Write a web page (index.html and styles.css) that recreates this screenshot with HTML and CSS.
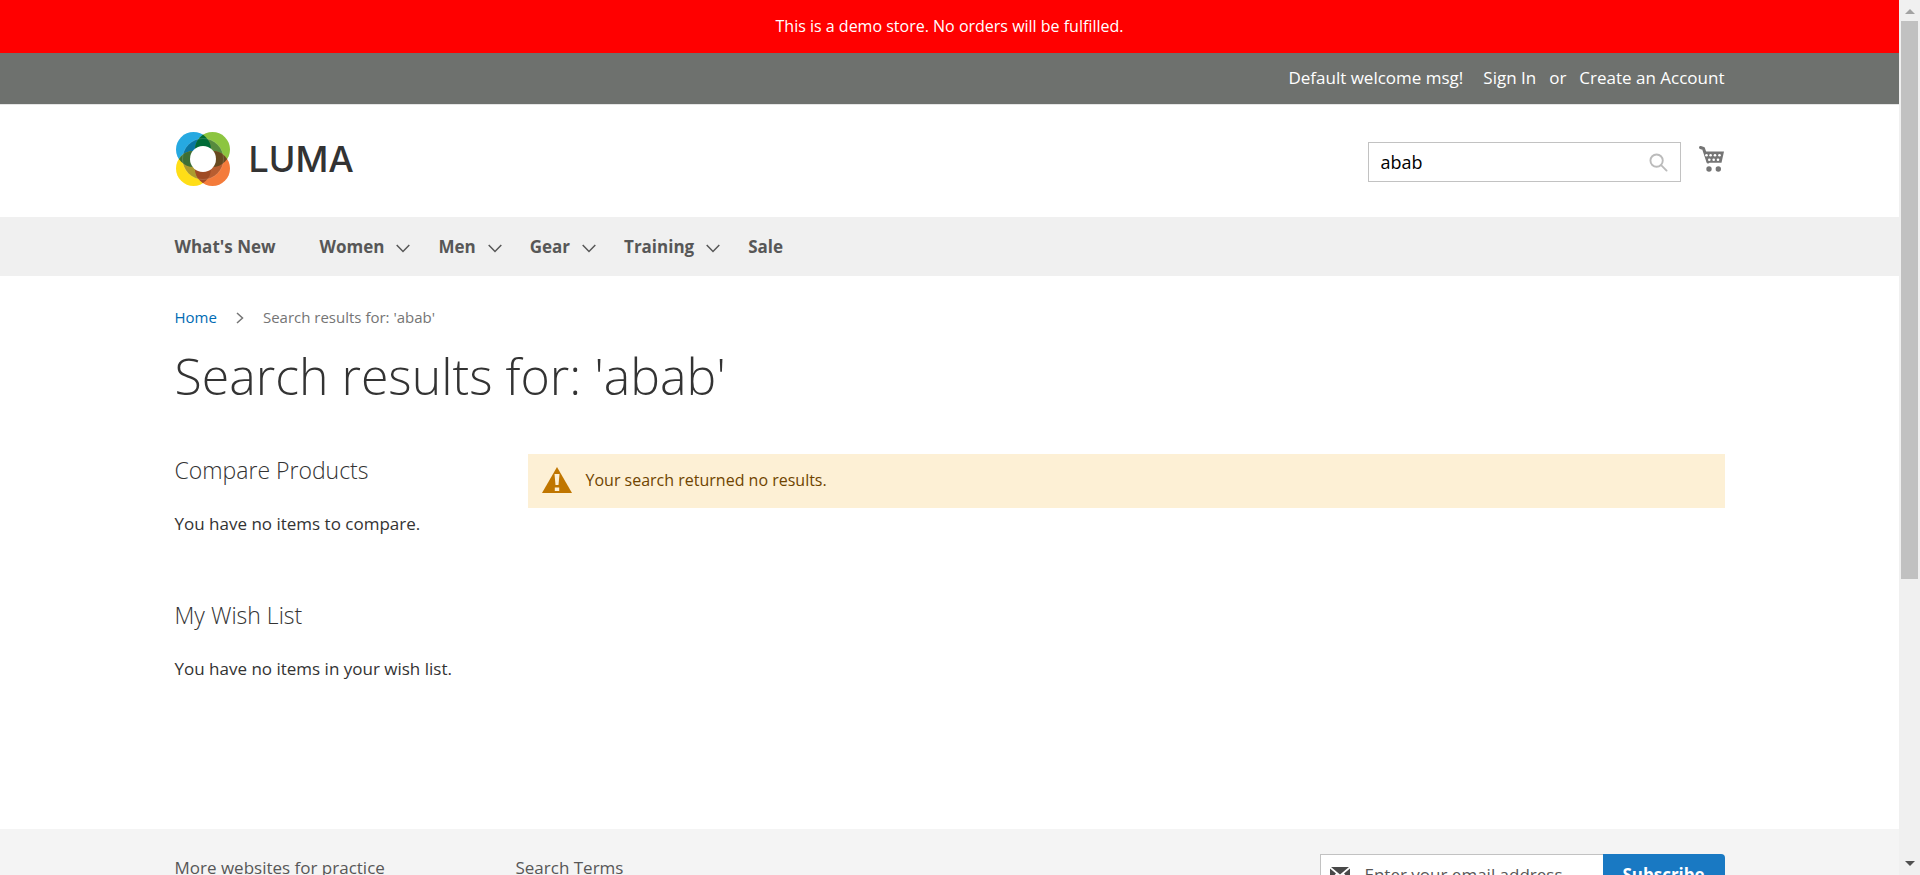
FILE: index.html
```html
<!DOCTYPE html>
<html lang="en">
<head>
<meta charset="utf-8">
<meta name="viewport" content="width=device-width, initial-scale=1">
<title>Search results for: 'abab'</title>
<link rel="stylesheet" href="styles.css">
</head>
<body>
<div class="viewport">
  <div class="page">
    <div class="demo-notice">This is a demo store. No orders will be fulfilled.</div>

    <header>
      <div class="top-bar">
        <div class="container top-links">
          <span class="greeting">Default welcome msg!</span>
          <a href="#signin">Sign In</a>
          <span class="or">or</span>
          <a href="#register">Create an Account</a>
        </div>
      </div>
      <div class="container brand-row">
        <a class="logo" href="#home" aria-label="Luma">
          <svg class="logo-mark" viewBox="0 0 54 54" aria-hidden="true">
            <defs>
              <clipPath id="ring"><circle cx="27" cy="27" r="20.5"/></clipPath>
              <clipPath id="tl"><circle cx="17.5" cy="17.5" r="17.5"/></clipPath>
              <clipPath id="br"><circle cx="36.5" cy="36.5" r="17.5"/></clipPath>
            </defs>
            <circle cx="17.5" cy="17.5" r="17.5" fill="#26a9e1"/>
            <circle cx="36.5" cy="17.5" r="17.5" fill="#8cc540"/>
            <circle cx="17.5" cy="36.5" r="17.5" fill="#ffde17"/>
            <circle cx="36.5" cy="36.5" r="17.5" fill="#f47b3b"/>
            <g clip-path="url(#ring)">
              <circle cx="17.5" cy="17.5" r="17.5" fill="#0a75a0"/>
              <circle cx="36.5" cy="17.5" r="17.5" fill="#578a3e"/>
              <circle cx="17.5" cy="36.5" r="17.5" fill="#ab9a2f"/>
              <circle cx="36.5" cy="36.5" r="17.5" fill="#b85d30"/>
            </g>
            <g clip-path="url(#tl)">
              <circle cx="36.5" cy="17.5" r="17.5" fill="#006b37"/>
              <circle cx="17.5" cy="36.5" r="17.5" fill="#3d6f35"/>
            </g>
            <g clip-path="url(#br)">
              <circle cx="36.5" cy="17.5" r="17.5" fill="#67491f"/>
              <circle cx="17.5" cy="36.5" r="17.5" fill="#a04b24"/>
            </g>
            <circle cx="27" cy="27" r="20.5" fill="none" stroke="#fff" stroke-opacity=".25" stroke-width=".6"/>
            <circle cx="27" cy="27" r="13" fill="#fff"/>
          </svg>
          <span class="logo-name">LUMA</span>
        </a>
        <form class="search" role="search">
          <input type="text" value="abab" aria-label="Search">
          <button type="button" aria-label="Search">
            <svg viewBox="0 0 20 20" aria-hidden="true"><circle cx="8" cy="8" r="6.5"/><path d="M13 13l5.500 5.500"/></svg>
          </button>
        </form>
        <a class="cart" href="#cart" aria-label="My Cart">
          <svg viewBox="0 0 26 27" aria-hidden="true">
            <path d="M2.500 2.500L5.500 3.500L10 17" fill="none" stroke="#757575" stroke-width="3" stroke-linecap="round" stroke-linejoin="round"/>
            <path d="M6 6.500h20L23.500 17.700H9z" fill="#757575"/>
            <g fill="#fff"><circle cx="8.500" cy="10.300" r="1.300"/><circle cx="12.600" cy="10.300" r="1.300"/><circle cx="17" cy="10.300" r="1.300"/><circle cx="21.500" cy="10.300" r="1.300"/><circle cx="11.300" cy="14.700" r="1.300"/><circle cx="15.700" cy="14.700" r="1.300"/><circle cx="20" cy="14.700" r="1.300"/></g>
            <circle cx="11" cy="24" r="2.700" fill="#757575"/><circle cx="20.300" cy="24" r="2.700" fill="#757575"/>
          </svg>
        </a>
      </div>
    </header>

    <nav class="main-nav">
      <ul class="container">
        <li><a href="#new" class="plain">What's New</a></li>
        <li><a href="#women">Women<svg class="chev" viewBox="0 0 14 9"><path d="M.7 1L7 7.500L13.300 1"/></svg></a></li>
        <li><a href="#men">Men<svg class="chev" viewBox="0 0 14 9"><path d="M.7 1L7 7.500L13.300 1"/></svg></a></li>
        <li><a href="#gear">Gear<svg class="chev" viewBox="0 0 14 9"><path d="M.7 1L7 7.500L13.300 1"/></svg></a></li>
        <li><a href="#training">Training<svg class="chev" viewBox="0 0 14 9"><path d="M.7 1L7 7.500L13.300 1"/></svg></a></li>
        <li><a href="#sale">Sale</a></li>
      </ul>
    </nav>

    <div class="container breadcrumbs">
      <a href="#home">Home</a>
      <svg viewBox="0 0 8 12" aria-hidden="true"><path d="M1 1l5.500 5L1 11"/></svg>
      <span>Search results for: 'abab'</span>
    </div>

    <main class="container">
      <h1>Search results for: 'abab'</h1>
      <div class="columns">
        <aside>
          <section>
            <h2>Compare Products</h2>
            <p>You have no items to compare.</p>
          </section>
          <section>
            <h2>My Wish List</h2>
            <p>You have no items in your wish list.</p>
          </section>
        </aside>
        <div class="results">
          <div class="notice" role="alert">
            <svg viewBox="0 0 30 26" aria-hidden="true"><path d="M15 0L30 26H0z" fill="#c07600"/><path d="M12.500 7h5l-1 11h-3zM12.800 20.500h4.400v3.500h-4.400z" fill="#fdf0d5"/></svg>
            <span>Your search returned no results.</span>
          </div>
        </div>
      </div>
    </main>

    <footer>
      <div class="container footer-row">
        <ul class="footer-links">
          <li><a href="#practice">More websites for practice</a></li>
          <li><a href="#terms">Search Terms</a></li>
        </ul>
        <form class="newsletter">
          <div class="email">
            <svg viewBox="0 0 20 15" aria-hidden="true"><path d="M1 0h18l-9 7.500zM0 1.500l6 5L0 13zM20 1.500v11.500l-6-6.500zM7.500 7.800L10 9.800l2.500-2L19 15H1z" fill="#494949"/></svg>
            <input type="email" placeholder="Enter your email address" aria-label="Email address">
          </div>
          <button type="button">Subscribe</button>
        </form>
      </div>
    </footer>
  </div>

  <div class="scrollbar" aria-hidden="true">
    <span class="arrow up"></span>
    <div class="track"><div class="thumb"></div></div>
    <span class="arrow down"></span>
  </div>
</div>
</body>
</html>
```
FILE: styles.css
```css
* { box-sizing: border-box; }
body {
  margin: 0;
  font-family: "Open Sans", "Noto Sans", sans-serif;
  font-size: 17px;
  line-height: 25px;
  color: #333;
  background: #fff;
}
h1, h2, p, ul { margin: 0; padding: 0; }
ul { list-style: none; display: flex; }
a { color: inherit; text-decoration: none; }
svg { display: block; flex: none; }
input, button { font: inherit; border: 0; margin: 0; padding: 0; background: none; }

.viewport { display: flex; height: 100vh; overflow: hidden; }
.page { flex: 1; min-width: 0; display: flex; flex-direction: column; overflow: hidden; }
.page > * { flex: none; }
.container { width: 100%; max-width: 1600px; margin: 0 auto; padding: 0 25px; }

.demo-notice {
  padding: 14px 0;
  background: #f00;
  color: #fff;
  font-size: 16px;
  text-align: center;
}
.top-bar { padding: 12px 0 14px; background: #6e716e; color: #fff; border-bottom: 1px solid #e5e5e5; }
.top-links { display: flex; justify-content: flex-end; }
.greeting { margin-right: 20px; }
.or { margin: 0 13px; }

.brand-row { display: flex; align-items: flex-start; padding-top: 27px; padding-bottom: 31px; }
.logo { display: flex; align-items: center; gap: 19px; padding-left: 1px; margin-right: auto; }
.logo-mark { width: 54px; height: 54px; }
.logo-name { font-family: Inter, sans-serif; font-size: 36px; font-weight: 500; color: #333; }
.search { display: flex; width: 313px; height: 40px; margin: 10px 17px 0 0; border: 1px solid #c2c2c2; }
.search input { flex: 1; min-width: 0; padding: 0 12px; color: #000; outline: 0; font-size: 18px; }
.search button { padding: 0 12px; }
.search svg { width: 19px; height: 19px; fill: none; stroke: #bbb; stroke-width: 2; stroke-linecap: round; }
.cart { padding: 13px 1px 0 0; }
.cart svg { width: 26px; height: 27px; }

.main-nav { padding: 17px 0; background: #f0f0f0; color: #575757; font-weight: 700; }
.main-nav ul { gap: 28px; }
.main-nav a { display: flex; align-items: center; gap: 12px; }
.main-nav .plain { padding-right: 16px; }
.chev { width: 14px; height: 9px; margin-top: 3px; fill: none; stroke: #575757; stroke-width: 1.5; }

.breadcrumbs { display: flex; align-items: center; gap: 19px; margin-top: 29px; font-size: 15px; color: #757575; }
.breadcrumbs a { color: #006bb4; }
.breadcrumbs svg { width: 8px; height: 12px; fill: none; stroke: #757575; stroke-width: 1.5; }

h1 { margin-top: 18px; font-size: 50px; line-height: 56px; font-weight: 300; }
.columns { display: flex; margin-top: 50px; }
aside { width: 353px; flex: none; min-height: 375px; }
section { margin-bottom: 63px; }
h2 { font-size: 23px; line-height: 33px; font-weight: 300; }
section p { margin-top: 24px; }
.results { flex: 1; }
.notice { display: flex; align-items: center; gap: 14px; padding: 13px 14px 15px; background: #fdf0d5; color: #6f4400; font-size: 16px; line-height: 26px; }
.notice svg { width: 30px; height: 26px; }

footer { padding-top: 25px; background: #f4f4f4; color: #575757; }
.footer-row { display: flex; justify-content: space-between; }
.footer-links { padding-top: 1px; }
.footer-links li { width: 341px; }
.newsletter { display: flex; height: 40px; width: 405px; }
.email { display: flex; align-items: center; gap: 15px; flex: 1; padding-left: 9px; background: #fff; border: 1px solid #c2c2c2; border-right: 0; }
.email svg { width: 20px; height: 15px; }
.email input { flex: 1; min-width: 0; }
.email input::placeholder { color: #575757; opacity: 1; }
.newsletter button { width: 122px; background: #1979c3; color: #fff; font-weight: 700; border-radius: 0 4px 4px 0; }

.scrollbar { flex: none; width: 21px; display: flex; flex-direction: column; align-items: center; background: #f0f0f0; }
.track { flex: 1; width: 17px; }
.thumb { height: 67%; background: #c1c1c1; }
.arrow { margin: 9px 0 7px; border: 5px solid transparent; }
.up { border-top: 0; border-bottom-color: #a3a3a3; }
.down { margin: 7px 0 9px; border-bottom: 0; border-top-color: #505050; }
```
